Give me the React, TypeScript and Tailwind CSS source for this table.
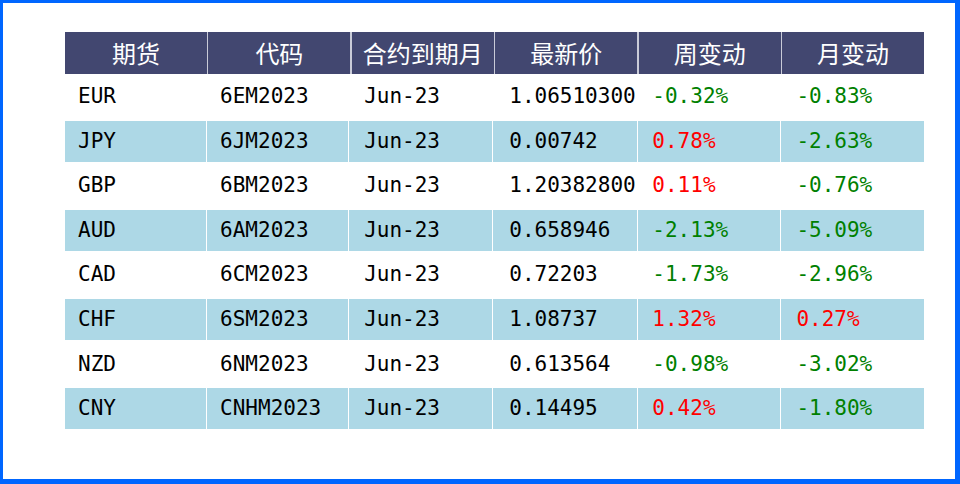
import React from "react";

type Row = [string, string, string, string, string, string];

const rows: Row[] = [
  ["EUR", "6EM2023", "Jun-23", "1.06510300", "-0.32%", "-0.83%"],
  ["JPY", "6JM2023", "Jun-23", "0.00742", "0.78%", "-2.63%"],
  ["GBP", "6BM2023", "Jun-23", "1.20382800", "0.11%", "-0.76%"],
  ["AUD", "6AM2023", "Jun-23", "0.658946", "-2.13%", "-5.09%"],
  ["CAD", "6CM2023", "Jun-23", "0.72203", "-1.73%", "-2.96%"],
  ["CHF", "6SM2023", "Jun-23", "1.08737", "1.32%", "0.27%"],
  ["NZD", "6NM2023", "Jun-23", "0.613564", "-0.98%", "-3.02%"],
  ["CNY", "CNHM2023", "Jun-23", "0.14495", "0.42%", "-1.80%"],
];

const headers = ["期货", "代码", "合约到期月", "最新价", "周变动", "月变动"];
const pads = ["pl-[13px]", "pl-[13px]", "pl-[15px]", "pl-[16px]", "pl-[14px]", "pl-[15px]"];

function colorFor(v: string, i: number) {
  if (i < 4) return "text-black";
  return v.startsWith("-") ? "text-[#008000]" : "text-[#ff0000]";
}

export default function App() {
  return (
    <div className="w-[960px] h-[484px] bg-white box-border border-solid border-[#0066ff] border-t-[3px] border-l-[3px] border-r-[5px] border-b-[5px] pl-[62px] pt-[29px]">
      <div className="w-[859px]">
        <div className="flex gap-[1.5px] h-[42px] bg-[#c9cbd8]">
          {headers.map((h) => (
            <div
              key={h}
              className="flex-1 bg-[#424770] text-white flex items-center justify-center text-[24px] leading-none"
              style={{ fontFamily: '"Noto Sans CJK SC", "Noto Sans", sans-serif' }}
            >
              {h}
            </div>
          ))}
        </div>
        {rows.map((r, ri) => (
          <div key={ri} className="h-[44.6px] pt-[2px] pb-[1.6px] flex gap-[1.5px]">
            {r.map((c, ci) => (
              <div
                key={ci}
                className={`flex-1 flex items-center ${pads[ci]} ${ri % 2 === 1 ? "bg-[#add8e6]" : "bg-white"} ${colorFor(c, ci)} text-[21px] leading-none`}
                style={{ fontFamily: '"DejaVu Sans Mono", "Liberation Mono", monospace' }}
              >
                {c}
              </div>
            ))}
          </div>
        ))}
      </div>
    </div>
  );
}
